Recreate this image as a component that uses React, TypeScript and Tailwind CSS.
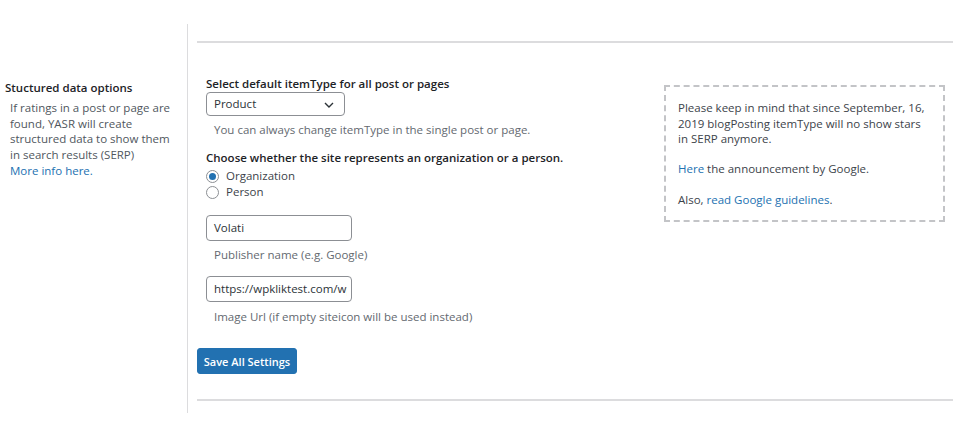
export default function App() {
  return (
    <div
      className="w-[969px] h-[440px] bg-white pt-[24px] text-[11.5px] text-[#3c434a]"
      style={{ fontFamily: '"Open Sans", sans-serif' }}
    >
      <div className="flex">
        {/* Left label column */}
        <div className="w-[187px] shrink-0 pt-[56px] pl-[5px]">
          <div className="font-semibold text-[#1d2327] leading-[16px] text-[11.5px]">
            Stuctured data options
          </div>
          <div className="mt-[4px] pl-[5px] leading-[15.7px] text-[#50575e]">
            If ratings in a post or page are
            <br />
            found, YASR will create
            <br />
            structured data to show them
            <br />
            in search results (SERP)
            <br />
            <a className="text-[#2271b1]">More info here.</a>
          </div>
        </div>

        {/* Right content column */}
        <div className="flex-1 border-l border-[#dcdcde] pl-[9px] pr-[16px] pt-[17px] pb-[12px]">
          <div className="h-[2px] bg-[#dcdcde]" />
          <div className="flex items-start justify-between">
            <div className="pl-[9px] pt-[33px]">
              <div className="font-semibold text-[#1d2327] leading-[16px] whitespace-nowrap">
                Select default itemType for all post or pages
              </div>
              <div className="relative w-[139px] h-[24px] border border-[#8c8f94] rounded-[4px] flex items-center pl-[7px] text-[#2c3338]">
                <span>Product</span>
                <svg
                  className="absolute right-[10px] top-[9px]"
                  width="10"
                  height="6"
                  viewBox="0 0 10 6"
                  fill="none"
                >
                  <path d="M1 1l4 4 4-4" stroke="#2c3338" strokeWidth="1.4" />
                </svg>
              </div>
              <div className="mt-[6px] pl-[8px] leading-[16px] text-[#646970]">
                You can always change itemType in the single post or page.
              </div>
              <div className="mt-[12px] font-semibold text-[#1d2327] leading-[16px] whitespace-nowrap">
                Choose whether the site represents an organization or a person.
              </div>
              <div className="mt-[2px]">
                <label className="flex items-center h-[16px] gap-[7px]">
                  <span className="w-[13px] h-[13px] rounded-full border border-[#8c8f94] flex items-center justify-center">
                    <span className="w-[7px] h-[7px] rounded-full bg-[#2271b1]" />
                  </span>
                  <span>Organization</span>
                </label>
                <label className="flex items-center h-[16px] gap-[7px]">
                  <span className="w-[13px] h-[13px] rounded-full border border-[#8c8f94]" />
                  <span>Person</span>
                </label>
              </div>

              <div className="mt-[15px] w-[146px] h-[26px] border border-[#8c8f94] rounded-[4px] flex items-center pl-[7px] text-[#2c3338]">
                Volati
              </div>
              <div className="mt-[6px] pl-[8px] leading-[16px] text-[#646970]">
                Publisher name (e.g. Google)
              </div>
              <div className="mt-[13px] w-[146px] h-[26px] border border-[#8c8f94] rounded-[4px] flex items-center pl-[7px] text-[#2c3338]">
                <span className="block w-[133px] overflow-hidden whitespace-nowrap">
                  https://wpkliktest.com/wp
                </span>
              </div>
              <div className="mt-[7px] pl-[8px] leading-[16px] text-[#646970]">
                Image Url (if empty siteicon will be used instead)
              </div>
            </div>

            <div className="mt-[42px] mr-[8px] w-[281px] h-[137px] border-2 border-dashed border-[#c3c4c7] pl-[12px] pt-[13px] leading-[15.6px] text-[#3c434a] whitespace-nowrap">
              <p>
                Please keep in mind that since September, 16,
                <br />
                2019 blogPosting itemType will no show stars
                <br />
                in SERP anymore.
              </p>
              <p className="mt-[14px]">
                <a className="text-[#2271b1]">Here</a> the announcement by Google.
              </p>
              <p className="mt-[16px]">
                Also, <a className="text-[#2271b1]">read Google guidelines</a>.
              </p>
            </div>
          </div>

          <button className="mt-[23px] w-[100px] h-[26px] rounded-[3px] bg-[#2271b1] border border-[#2271b1] text-white text-[11px] font-semibold leading-none flex items-center justify-center">
            Save All Settings
          </button>
          <div className="mt-[25px] h-[2px] bg-[#dcdcde]" />
        </div>
      </div>
    </div>
  );
}
